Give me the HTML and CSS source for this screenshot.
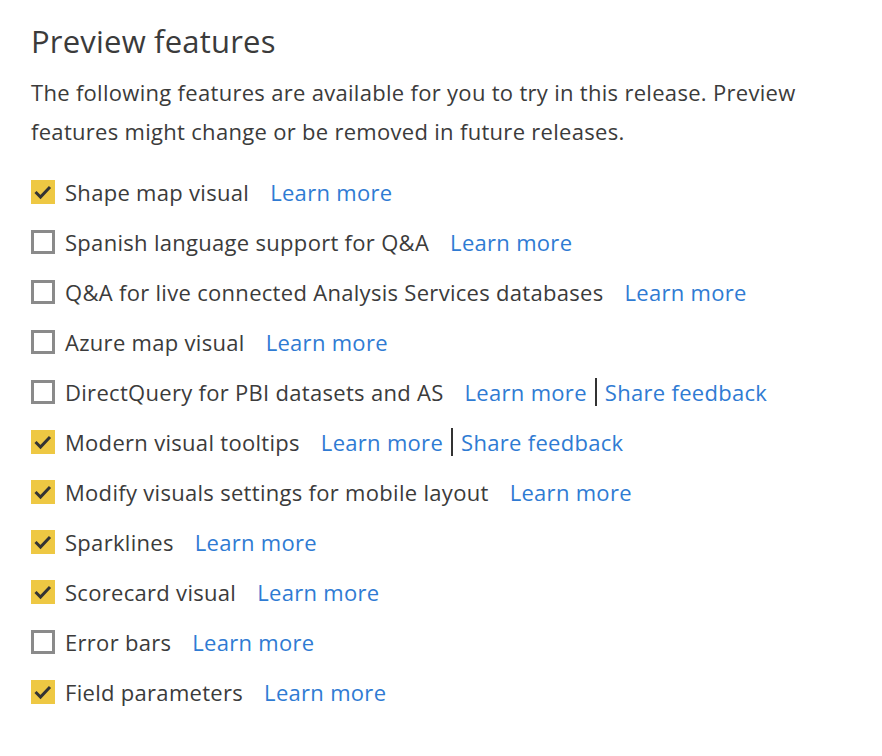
FILE: index.html
```html
<!DOCTYPE html>
<html lang="en">
<head>
    <meta charset="UTF-8">
    <meta name="viewport" content="width=device-width, initial-scale=1.0">
    <title>Preview features</title>
    <link rel="stylesheet" href="styles.css">
</head>
<body>

    <h1>Preview features</h1>
    <p class="intro">The following features are available for you to try in this release. Preview features might change or be removed in future releases.</p>

    <ul class="features">
        <li class="feature checked">
            <span class="box"><svg viewBox="0 0 24 24"><path d="M4.5 12l5 5 9.5-10"/></svg></span>
            <span class="name">Shape map visual</span>
            <a href="#" class="link">Learn more</a>
        </li>
        <li class="feature">
            <span class="box"></span>
            <span class="name">Spanish language support for Q&amp;A</span>
            <a href="#" class="link">Learn more</a>
        </li>
        <li class="feature">
            <span class="box"></span>
            <span class="name">Q&amp;A for live connected Analysis Services databases</span>
            <a href="#" class="link">Learn more</a>
        </li>
        <li class="feature">
            <span class="box"></span>
            <span class="name">Azure map visual</span>
            <a href="#" class="link">Learn more</a>
        </li>
        <li class="feature">
            <span class="box"></span>
            <span class="name">DirectQuery for PBI datasets and AS</span>
            <a href="#" class="link">Learn more</a><span class="sep"></span><a href="#" class="link">Share feedback</a>
        </li>
        <li class="feature checked">
            <span class="box"><svg viewBox="0 0 24 24"><path d="M4.5 12l5 5 9.5-10"/></svg></span>
            <span class="name">Modern visual tooltips</span>
            <a href="#" class="link">Learn more</a><span class="sep"></span><a href="#" class="link">Share feedback</a>
        </li>
        <li class="feature checked">
            <span class="box"><svg viewBox="0 0 24 24"><path d="M4.5 12l5 5 9.5-10"/></svg></span>
            <span class="name">Modify visuals settings for mobile layout</span>
            <a href="#" class="link">Learn more</a>
        </li>
        <li class="feature checked">
            <span class="box"><svg viewBox="0 0 24 24"><path d="M4.5 12l5 5 9.5-10"/></svg></span>
            <span class="name">Sparklines</span>
            <a href="#" class="link">Learn more</a>
        </li>
        <li class="feature checked">
            <span class="box"><svg viewBox="0 0 24 24"><path d="M4.5 12l5 5 9.5-10"/></svg></span>
            <span class="name">Scorecard visual</span>
            <a href="#" class="link">Learn more</a>
        </li>
        <li class="feature">
            <span class="box"></span>
            <span class="name">Error bars</span>
            <a href="#" class="link">Learn more</a>
        </li>
        <li class="feature checked">
            <span class="box"><svg viewBox="0 0 24 24"><path d="M4.5 12l5 5 9.5-10"/></svg></span>
            <span class="name">Field parameters</span>
            <a href="#" class="link">Learn more</a>
        </li>
    </ul>

</body>
</html>
```
FILE: styles.css
```css
body {
    margin: 0;
    padding: 21px 31px 0;
    font-family: 'Open Sans', sans-serif;
    color: #3b3b3b;
    background-color: #fff;
}

h1 {
    font-size: 31px;
    font-weight: 400;
    margin: 0;
    line-height: 40px;
    letter-spacing: 0.2px;
}

.intro {
    font-size: 22px;
    letter-spacing: 0.3px;
    line-height: 39px;
    margin: 12px 0 0;
    width: 790px;
}

.features {
    list-style: none;
    margin: 16px 0 0;
    padding: 0;
}

.feature {
    display: flex;
    align-items: center;
    height: 50px;
    font-size: 22px;
    letter-spacing: 0.3px;
}

.box {
    width: 24px;
    height: 24px;
    box-sizing: border-box;
    border: 3px solid #8a8a8a;
    background-color: #fff;
    margin-right: 10px;
    flex-shrink: 0;
}

.checked .box {
    border: none;
    background-color: #eec843;
}

.box svg {
    display: block;
    width: 24px;
    height: 24px;
    fill: none;
    stroke: #333;
    stroke-width: 3;
}

.name {
    margin-right: 21px;
}

.link {
    color: #2f7bd3;
    text-decoration: none;
}

.link:hover {
    text-decoration: underline;
}

.sep {
    width: 2px;
    height: 28px;
    background-color: #333;
    margin: 0 8px;
}
```
